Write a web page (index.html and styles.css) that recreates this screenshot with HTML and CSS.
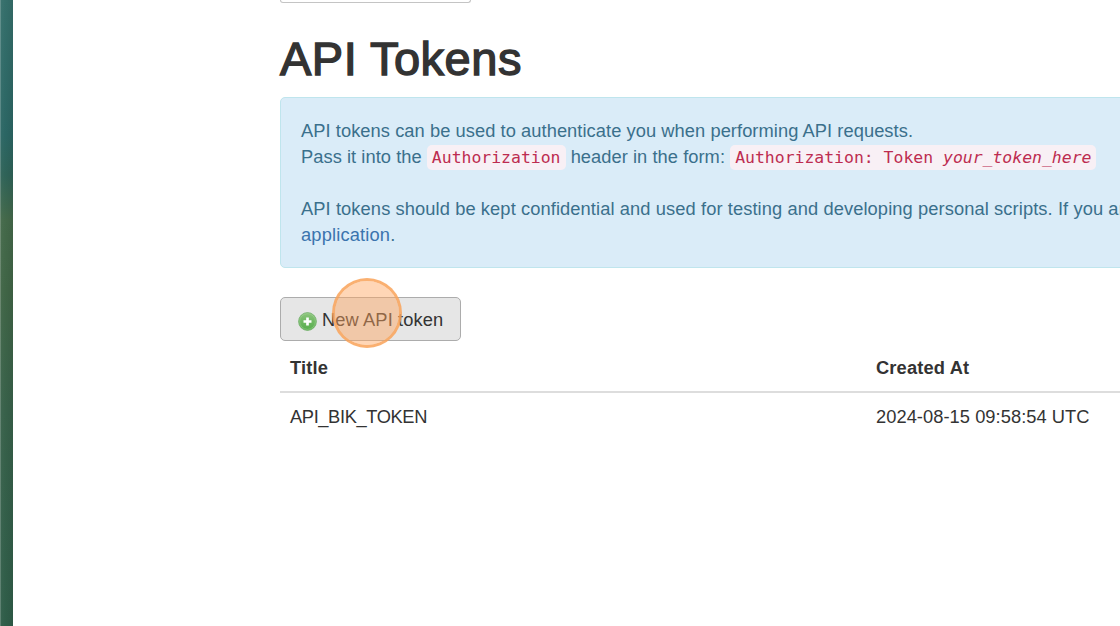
FILE: index.html
```html
<!DOCTYPE html>
<html lang="en">
<head>
<meta charset="utf-8">
<title>API Tokens</title>
<link rel="stylesheet" href="styles.css">
</head>
<body>
<div class="screen">
  <div class="desktop-edge"></div>
  <main class="content">
    <div class="cut-field"></div>
    <h1 class="heading">API Tokens</h1>
    <section class="notice">
      <p class="line line-intro">API tokens can be used to authenticate you when performing API requests.</p>
      <p class="line line-usage">Pass it into the <code class="code">Authorization</code> header in the form: <code class="code">Authorization: Token <em>your_token_here</em></code></p>
      <p class="line line-gap">API tokens should be kept confidential and used for testing and developing personal scripts. If you ar</p>
      <p class="line line-gap-end"><a class="link">application</a>.</p>
    </section>
    <button class="new-token">
      <svg class="add-icon" viewBox="0 0 20 20">
        <defs><linearGradient id="green" x1="0" y1="0" x2="0" y2="1"><stop offset="0" stop-color="#8cc47c"/><stop offset="1" stop-color="#55ad4b"/></linearGradient></defs>
        <circle cx="10" cy="10" r="9.4" fill="url(#green)" stroke="#6fae67" stroke-width=".8"/>
        <circle cx="10" cy="10" r="8.3" fill="none" stroke="#b2dba5" stroke-width=".8" opacity=".5"/>
        <path d="M10 5.8v8.4M5.8 10h8.4" stroke="#fff" stroke-width="2.8"/>
      </svg>
      <span class="label">New API token</span>
      <span class="click-marker"></span>
    </button>
    <div class="table">
      <div class="row head"><span>Title</span><span class="created">Created At</span></div>
      <div class="row"><span class="name">API_BIK_TOKEN</span><span class="date">2024-08-15 09:58:54 UTC</span></div>
    </div>
  </main>
</div>
</body>
</html>
```
FILE: styles.css
```css
* { box-sizing: border-box; }
body { margin: 0; background: #fff; color: #333; font: 18.3px/26px "Liberation Sans", Arial, sans-serif; }
.screen { display: flex; width: 1120px; height: 626px; overflow: hidden; }
.desktop-edge { flex: 0 0 13px; border-left: 1px solid rgba(255,255,255,.2);
  background: linear-gradient(90deg, rgba(255,255,255,.04), transparent 40%, rgba(0,0,0,.07)), linear-gradient(#356f6b 0, #2b6664 135px, #2f6358 175px, #44694a 220px, #406546 290px, #38614a 410px, #2f5d49 626px); background-origin: border-box; }
.content { flex: 0 0 1400px; padding-left: 267px; }
.cut-field { width: 191px; height: 3px; border: 1px solid #c4c4c4; border-top: 0; border-radius: 0 0 5px 5px; }
.heading { margin: 30px 0 12px; height: 52px; font-size: 47px; line-height: 52px; font-weight: 400; letter-spacing: .5px; -webkit-text-stroke: 1.4px #333; white-space: nowrap; }
.notice { height: 171px; padding: 20px; border: 1px solid #bfe5ed; border-radius: 5px; background: #daecf8; color: #3a708c; }
.line { margin: 0; height: 26px; white-space: nowrap; }
.line-intro { letter-spacing: .06px; }
.line-usage { letter-spacing: .05px; }
.line-gap { margin-top: 26px; letter-spacing: .096px; }
.line-gap-end { letter-spacing: .16px; }
.code { padding: 3px 5px; border-radius: 5px; background: #f8f0f5; color: #bd2c50; font: 16.45px/18px "DejaVu Sans Mono", monospace; letter-spacing: 0; }
.link { color: #3a74ae; }
.new-token { position: relative; display: flex; align-items: center; width: 181px; height: 44px; margin: 29px 0 0; padding: 2px 0 0 17px; border: 1px solid #acacac; border-radius: 5px; background: #e6e6e6; color: #333; font: inherit; letter-spacing: .1px; white-space: nowrap; }
.add-icon { width: 19px; height: 19px; margin: 3px 5px 0 0; }
.click-marker { position: absolute; left: 51px; top: -20px; width: 70px; height: 70px; border: 3px solid rgba(249,162,88,.85); border-radius: 50%; background: rgba(255,165,95,.46); background-clip: padding-box; }
.row { display: grid; grid-template-columns: 586px 1fr; padding: 11px 10px; }
.head { padding-top: 14px; padding-bottom: 10px; border-bottom: 2px solid #ddd; font-weight: 700; letter-spacing: .15px; }
.name { letter-spacing: -.38px; }
.date { letter-spacing: .05px; }
```
